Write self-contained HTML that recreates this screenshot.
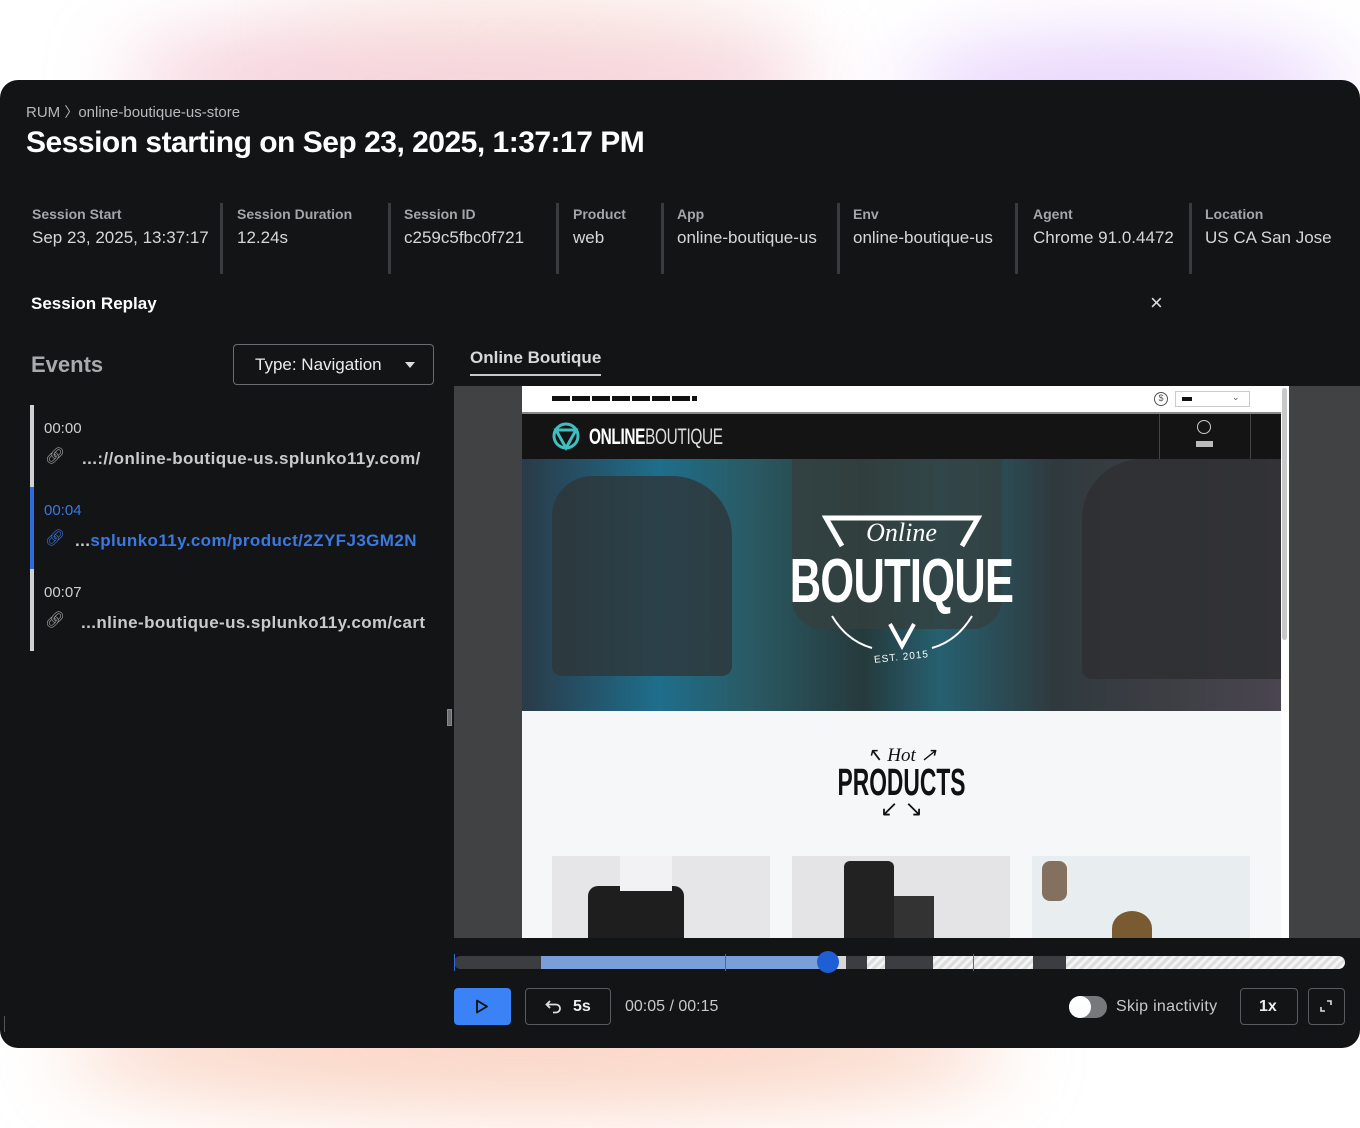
<!DOCTYPE html>
<html><head><meta charset="utf-8"><style>
*{margin:0;padding:0;box-sizing:border-box}
body{width:1360px;height:1128px;background:#fff;position:relative;overflow:hidden;font-family:"Liberation Sans",sans-serif}
.glow{position:absolute;border-radius:50%;filter:blur(40px)}
.card{position:absolute;left:0;top:80px;width:1360px;height:968px;background:#131416;border-radius:18px;overflow:hidden;color:#e6e6e6}
.abs{position:absolute}
.lbl{font-size:14px;font-weight:bold;color:#a4a5a8}
.val{font-size:17px;color:#d6d7d9;white-space:nowrap;overflow:hidden}
.div{position:absolute;top:123px;width:3px;height:71px;background:#3a3b3e}
.ev{font-size:15px;color:#cfd0d2}
.url{font-size:17px;font-weight:bold;color:#c9cacc;white-space:nowrap;letter-spacing:.4px}
.btn{position:absolute;border:1px solid #5a5b5e;border-radius:4px}
</style></head><body>
<div class="glow" style="left:120px;top:20px;width:700px;height:120px;background:rgba(236,170,190,.55)"></div>
<div class="glow" style="left:280px;top:-10px;width:500px;height:70px;background:rgba(250,225,205,.4)"></div>
<div class="glow" style="left:900px;top:40px;width:450px;height:100px;background:rgba(215,180,250,.6)"></div>
<div class="glow" style="left:60px;top:990px;width:950px;height:120px;background:rgba(246,178,150,.55)"></div>

<div class="card">
 <div class="abs" style="left:26px;top:22px;font-size:15px;color:#b8b9bc">RUM <span style="font-size:14px">〉</span>online-boutique-us-store</div>
 <div class="abs" style="left:26px;top:46px;font-size:30px;font-weight:bold;color:#fff;letter-spacing:-.5px">Session starting on Sep 23, 2025, 1:37:17 PM</div>

 <div class="abs lbl" style="left:32px;top:126px">Session Start</div><div class="abs val" style="left:32px;top:148px">Sep 23, 2025, 13:37:17</div>
 <div class="div" style="left:220px"></div>
 <div class="abs lbl" style="left:237px;top:126px">Session Duration</div><div class="abs val" style="left:237px;top:148px">12.24s</div>
 <div class="div" style="left:388px"></div>
 <div class="abs lbl" style="left:404px;top:126px">Session ID</div><div class="abs val" style="left:404px;top:148px">c259c5fbc0f721</div>
 <div class="div" style="left:556px"></div>
 <div class="abs lbl" style="left:573px;top:126px">Product</div><div class="abs val" style="left:573px;top:148px">web</div>
 <div class="div" style="left:661px"></div>
 <div class="abs lbl" style="left:677px;top:126px">App</div><div class="abs val" style="left:677px;top:148px">online-boutique-us</div>
 <div class="div" style="left:837px"></div>
 <div class="abs lbl" style="left:853px;top:126px">Env</div><div class="abs val" style="left:853px;top:148px">online-boutique-us</div>
 <div class="div" style="left:1015px"></div>
 <div class="abs lbl" style="left:1033px;top:126px">Agent</div><div class="abs val" style="left:1033px;top:148px;width:140px">Chrome 91.0.4472</div>
 <div class="div" style="left:1189px"></div>
 <div class="abs lbl" style="left:1205px;top:126px">Location</div><div class="abs val" style="left:1205px;top:148px">US CA San Jose</div>

 <div class="abs" style="left:31px;top:214px;font-size:17px;font-weight:bold;color:#fff">Session Replay</div>
 <div class="abs" style="left:1150px;top:212px;font-size:22px;color:#ddd;line-height:1">×</div>

 <div class="abs" style="left:31px;top:272px;font-size:22px;font-weight:bold;color:#a9aaad">Events</div>
 <div class="btn" style="left:233px;top:264px;width:201px;height:41px;border-color:#6b6c6f"></div>
 <div class="abs" style="left:255px;top:275px;font-size:17px;color:#ececec">Type: Navigation</div>
 <div class="abs" style="left:405px;top:282px;width:0;height:0;border-left:5px solid transparent;border-right:5px solid transparent;border-top:6px solid #ddd"></div>
 <div class="abs" style="left:470px;top:268px;font-size:17px;font-weight:bold;color:#d8d8da">Online Boutique</div>
 <div class="abs" style="left:470px;top:294px;width:131px;height:2px;background:#c8c8ca"></div>

 <div class="abs" style="left:30px;top:325px;width:4px;height:246px;background:#d0d1d4"></div>
 <div class="abs" style="left:30px;top:407px;width:4px;height:82px;background:#2f6bdc"></div>
 <div class="abs ev" style="left:44px;top:340px">00:00</div>
 <div class="abs" style="left:45px;top:366px;font-size:16px;color:#aaa">&#128279;&#xFE0E;</div>
 <div class="abs url" style="left:82px;top:369px">...://online-boutique-us.splunko11y.com/</div>
 <div class="abs ev" style="left:44px;top:422px;color:#3b78e0">00:04</div>
 <div class="abs" style="left:45px;top:448px;font-size:16px;color:#3b78e0">&#128279;&#xFE0E;</div>
 <div class="abs url" style="left:75px;top:451px"><span style="color:#c9cacc">...</span><span style="color:#3b78e0">splunko11y.com/product/2ZYFJ3GM2N</span></div>
 <div class="abs ev" style="left:44px;top:504px">00:07</div>
 <div class="abs" style="left:45px;top:530px;font-size:16px;color:#aaa">&#128279;&#xFE0E;</div>
 <div class="abs url" style="left:81px;top:533px">...nline-boutique-us.splunko11y.com/cart</div>

 <div class="abs" style="left:447px;top:629px;width:5px;height:17px;background:#6b6c6f;border:1px solid #888"></div>

 <!-- replay viewport -->
 <div class="abs" style="left:454px;top:306px;width:906px;height:552px;background:#414244"></div>
 <div class="abs" style="left:522px;top:306px;width:767px;height:552px;background:#f5f7f9;overflow:hidden">
  <div class="abs" style="left:0;top:0;width:767px;height:28px;background:#fff;border-bottom:2px solid #888"></div>
  <div class="abs" style="left:30px;top:10px;width:145px;height:5px;background:repeating-linear-gradient(90deg,#111 0 18px,#fff 18px 20px)"></div>
  <div class="abs" style="left:632px;top:6px;width:14px;height:14px;border:1.5px solid #555;border-radius:50%;font-size:9px;text-align:center;line-height:11px;color:#555">$</div>
  <div class="abs" style="left:653px;top:5px;width:75px;height:16px;border:1px solid #ccc;background:#fff"></div>
  <div class="abs" style="left:660px;top:11px;width:10px;height:4px;background:#111"></div>
  <div class="abs" style="left:710px;top:6px;font-size:9px;color:#555">⌄</div>
  <div class="abs" style="left:0;top:28px;width:759px;height:45px;background:#141414"></div>
  <div class="abs" style="left:637px;top:28px;width:1px;height:45px;background:#444"></div>
  <div class="abs" style="left:728px;top:28px;width:1px;height:45px;background:#444"></div>
  <svg class="abs" style="left:29px;top:35px" width="30" height="30" viewBox="0 0 30 30"><circle cx="15" cy="15" r="12" fill="none" stroke="#3fbfbf" stroke-width="3"/><path d="M5 9 L25 9 L15 27 Z" fill="none" stroke="#3fbfbf" stroke-width="3"/></svg>
  <div class="abs" style="left:67px;top:38px;font-size:22px;color:#fff;transform:scaleX(.7);transform-origin:left;letter-spacing:-.5px"><b>ONLINE</b><span style="font-weight:normal;color:#ddd">BOUTIQUE</span></div>
  <div class="abs" style="left:675px;top:34px;width:14px;height:14px;border:1.5px solid #ccc;border-radius:50%"></div>
  <div class="abs" style="left:674px;top:55px;width:17px;height:6px;background:#bbb"></div>
  <!-- hero -->
  <div class="abs" style="left:0;top:73px;width:759px;height:252px;background:linear-gradient(90deg,#2a3a48 0%,#1e6e8c 18%,#2a5a64 30%,#253a3c 45%,#266070 55%,#2f3a3e 70%,#3d3e44 85%,#4a4550 100%)"></div>
  <div class="abs" style="left:30px;top:90px;width:180px;height:200px;border-radius:40px 60px 10px 10px;background:#2e3638;opacity:.8"></div>
  <div class="abs" style="left:270px;top:73px;width:210px;height:170px;border-radius:0 0 30px 30px;background:#34403f;opacity:.8"></div>
  <div class="abs" style="left:560px;top:73px;width:199px;height:220px;border-radius:60px 0 0 10px;background:#2e2f32;opacity:.85"></div>
  <svg class="abs" style="left:300px;top:120px" width="160" height="150" viewBox="0 0 160 150"><path d="M20 40 L4 12 L156 12 L140 40" fill="none" stroke="#fff" stroke-width="5"/><path d="M68 118 L80 140 L92 118" fill="none" stroke="#fff" stroke-width="4"/><path d="M10 110 Q25 135 50 142 M110 142 Q135 135 150 110" fill="none" stroke="#fff" stroke-width="2"/></svg>
  <div class="abs" style="left:0;top:132px;width:759px;text-align:center;font-size:26px;color:#fff;font-style:italic;font-family:'Liberation Serif',serif">Online</div>
  <div class="abs" style="left:0;top:160px;width:759px;text-align:center;font-size:62px;font-weight:bold;color:#fff;transform:scaleX(.7);letter-spacing:-1px">BOUTIQUE</div>
  <div class="abs" style="left:0;top:266px;width:759px;text-align:center;font-size:10px;color:#fff;letter-spacing:1px;transform:rotate(-6deg)">EST. 2015</div>
  <!-- hot products -->
  <div class="abs" style="left:0;top:358px;width:759px;text-align:center;font-size:19px;font-style:italic;font-family:'Liberation Serif',serif;color:#111">↖ Hot ↗</div>
  <div class="abs" style="left:0;top:376px;width:759px;text-align:center;font-size:38px;font-weight:bold;color:#111;transform:scaleX(.6)">PRODUCTS</div>
  <div class="abs" style="left:0;top:410px;width:759px;text-align:center;font-size:22px;color:#111">↙ ↘</div>
  <div class="abs" style="left:30px;top:470px;width:218px;height:90px;background:#e6e6e8"></div>
  <div class="abs" style="left:66px;top:500px;width:96px;height:60px;background:#1e1e1e;border-radius:10px 10px 0 0"></div>
  <div class="abs" style="left:98px;top:470px;width:52px;height:35px;background:#f2f2f4"></div>
  <div class="abs" style="left:270px;top:470px;width:218px;height:90px;background:#e4e4e6"></div>
  <div class="abs" style="left:322px;top:475px;width:50px;height:85px;background:#222;border-radius:6px 6px 0 0"></div>
  <div class="abs" style="left:372px;top:510px;width:40px;height:50px;background:#333"></div>
  <div class="abs" style="left:510px;top:470px;width:218px;height:90px;background:#e8eef0"></div>
  <div class="abs" style="left:590px;top:525px;width:40px;height:35px;background:#7a5a30;border-radius:50% 50% 0 0"></div>
  <div class="abs" style="left:520px;top:475px;width:25px;height:40px;background:#5a3a20;border-radius:8px;opacity:.7"></div>
  <div class="abs" style="left:759px;top:0;width:8px;height:552px;background:#fff"></div>
  <div class="abs" style="left:760px;top:2px;width:5px;height:252px;background:#c8c8c8;border-radius:3px"></div>
 </div>

 <!-- timeline -->
 <div class="abs" style="left:454px;top:876px;width:891px;height:13px;border-radius:7px;background:#3c3d40;overflow:hidden">
  <div class="abs" style="left:87px;top:0;width:287px;height:13px;background:#7a9ed8"></div>
  <div class="abs" style="left:374px;top:0;width:18px;height:13px;background:#d8d8d8"></div>
  <div class="abs" style="left:413px;top:0;width:18px;height:13px;background:repeating-linear-gradient(135deg,#ddd 0 3px,#f4f4f4 3px 6px)"></div>
  <div class="abs" style="left:479px;top:0;width:100px;height:13px;background:repeating-linear-gradient(135deg,#ddd 0 3px,#f4f4f4 3px 6px)"></div>
  <div class="abs" style="left:612px;top:0;width:279px;height:13px;background:repeating-linear-gradient(135deg,#ddd 0 3px,#f4f4f4 3px 6px)"></div>
 </div>
 <div class="abs" style="left:454px;top:874px;width:1px;height:17px;background:#2f6bdc"></div>
 <div class="abs" style="left:725px;top:874px;width:1px;height:17px;background:#2f6bdc"></div>
 <div class="abs" style="left:973px;top:874px;width:1px;height:17px;background:#2f6bdc"></div>
 <div class="abs" style="left:817px;top:871px;width:22px;height:22px;border-radius:50%;background:#1f5fd6"></div>

 <!-- controls -->
 <div class="abs" style="left:454px;top:908px;width:57px;height:37px;background:#3b82f6;border-radius:4px"></div>
 <svg class="abs" style="left:475px;top:919px" width="14" height="15" viewBox="0 0 14 15"><path d="M2 1.5 L12 7.5 L2 13.5 Z" fill="none" stroke="#111" stroke-width="1.8" stroke-linejoin="round"/></svg>
 <div class="btn" style="left:525px;top:908px;width:86px;height:37px"></div>
 <svg class="abs" style="left:545px;top:919px" width="18" height="15" viewBox="0 0 18 15"><path d="M5 2 L1.5 5.5 L5 9 M1.5 5.5 H11 A4 4 0 0 1 11 13.5 H8" fill="none" stroke="#ddd" stroke-width="1.8"/></svg>
 <div class="abs" style="left:573px;top:918px;font-size:16px;font-weight:bold;color:#eee">5s</div>
 <div class="abs" style="left:625px;top:918px;font-size:16px;color:#c8c9cb">00:05 / 00:15</div>
 <div class="abs" style="left:1069px;top:916px;width:38px;height:22px;border-radius:11px;background:#77787b"></div>
 <div class="abs" style="left:1069px;top:916px;width:22px;height:22px;border-radius:50%;background:#fff"></div>
 <div class="abs" style="left:1116px;top:918px;font-size:16px;color:#c8c9cb;letter-spacing:.3px">Skip inactivity</div>
 <div class="btn" style="left:1240px;top:908px;width:58px;height:37px"></div>
 <div class="abs" style="left:1259px;top:918px;font-size:16px;font-weight:bold;color:#eee">1x</div>
 <div class="btn" style="left:1308px;top:908px;width:37px;height:37px"></div>
 <svg class="abs" style="left:1318px;top:918px" width="16" height="16" viewBox="0 0 16 16"><path d="M9 3 H13 V7 M3 9 V13 H7" fill="none" stroke="#ddd" stroke-width="1.6"/></svg>
 <div class="abs" style="left:4px;top:936px;width:1px;height:16px;background:#555"></div>
</div>
</body></html>
